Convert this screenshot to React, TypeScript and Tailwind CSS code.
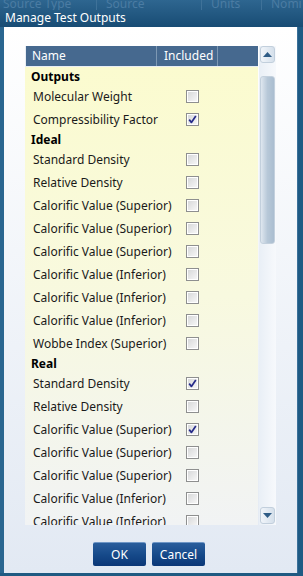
import React from "react";

type Row = { label: string; group?: boolean; checked?: boolean };

const rows: Row[] = [
  { label: "Outputs", group: true },
  { label: "Molecular Weight" },
  { label: "Compressibility Factor", checked: true },
  { label: "Ideal", group: true },
  { label: "Standard Density" },
  { label: "Relative Density" },
  { label: "Calorific Value (Superior)" },
  { label: "Calorific Value (Superior)" },
  { label: "Calorific Value (Superior)" },
  { label: "Calorific Value (Inferior)" },
  { label: "Calorific Value (Inferior)" },
  { label: "Calorific Value (Inferior)" },
  { label: "Wobbe Index (Superior)" },
  { label: "Real", group: true },
  { label: "Standard Density", checked: true },
  { label: "Relative Density" },
  { label: "Calorific Value (Superior)", checked: true },
  { label: "Calorific Value (Superior)" },
  { label: "Calorific Value (Superior)" },
  { label: "Calorific Value (Inferior)" },
  { label: "Calorific Value (Inferior)" },
];

function CheckBox({ checked }: { checked?: boolean }) {
  return (
    <div className="w-[13px] h-[13px] border border-[#8e8f8f] bg-white p-[1px]">
      <div className="w-full h-full bg-gradient-to-br from-[#d8d9da] to-[#f6f6f6] flex items-center justify-center">
        {checked && (
          <svg width="9" height="9" viewBox="0 0 9 9">
            <path d="M1.2 4.6 L3.4 7.4 L7.8 0.9" fill="none" stroke="#262b8a" strokeWidth="1.7" strokeLinejoin="round" />
          </svg>
        )}
      </div>
    </div>
  );
}

function ScrollButton({ up }: { up?: boolean }) {
  return (
    <div className="h-[17px] mx-[1px] rounded-[3px] border border-[#c2cfdc] bg-gradient-to-r from-[#f1f5fa] to-[#d5e0eb] flex items-center justify-center">
      <svg width="9" height="5" viewBox="0 0 9 5">
        {up ? <path d="M0 5 L4.5 0 L9 5 Z" fill="#2f5c86" /> : <path d="M0 0 L4.5 5 L9 0 Z" fill="#2f5c86" />}
      </svg>
    </div>
  );
}

export default function App() {
  return (
    <div
      className="w-[303px] h-[576px] bg-[#245d86] flex flex-col overflow-hidden select-none"
      style={{ fontFamily: '"Segoe UI", "Noto Sans", sans-serif' }}
    >
      {/* title bar, the grid behind the dialog shows through faintly */}
      <div className="h-[27px] shrink-0 flex flex-col bg-gradient-to-b from-[#2e6690] to-[#184c74]">
        <div className="h-[10px] shrink-0 overflow-hidden flex text-[12px] text-[#4b7ca3] leading-[12px]">
          <span className="w-[97px] pl-[3px] border-r border-[#3f7299] -mt-[2px]">Source Type</span>
          <span className="w-[105px] pl-[9px] border-r border-[#3f7299] -mt-[2px]">Source</span>
          <span className="w-[60px] pl-[9px] border-r border-[#3f7299] -mt-[2px]">Units</span>
          <span className="pl-[9px] -mt-[2px]">Nomi</span>
        </div>
        <div className="pl-[5px] text-[12px] leading-[16px] text-white">Manage Test Outputs</div>
      </div>

      <div className="flex flex-1 min-h-0">
        <div className="w-[4px] shrink-0 bg-[#2a6690]" />
        <div className="flex-1 flex flex-col bg-gradient-to-b from-white to-[#e2e9f3]">
          <div className="flex pl-[21px] pt-[19px] h-[498px]">
            {/* grid */}
            <div className="w-[233px] flex flex-col">
              <div className="h-[21px] shrink-0 bg-[#46698f] border-l border-b border-[#e8eef5] flex text-[12px] text-white leading-[20px]">
                <div className="w-[131px] pl-[6px] border-r border-[#7d98b3]">Name</div>
                <div className="w-[61px] pl-[7px] border-r border-[#7d98b3]">Included</div>
                <div className="flex-1" />
              </div>
              <div className="flex-1 overflow-hidden bg-gradient-to-b from-[#fbfbcf] via-[#f8f9df] to-[#f1f3f4] pt-[1px]">
                {rows.map((r, i) =>
                  r.group ? (
                    <div key={i} className="h-[17px] pl-[6px] flex items-center text-[12px] font-bold text-black">
                      {r.label}
                    </div>
                  ) : (
                    <div key={i} className="h-[23px] flex items-center text-[12px] text-[#1a1a1a]">
                      <div className="w-[161px] pl-[8px]">{r.label}</div>
                      <CheckBox checked={r.checked} />
                    </div>
                  )
                )}
              </div>
            </div>
            {/* scrollbar */}
            <div className="w-[17px] ml-[1px] flex flex-col bg-gradient-to-r from-[#e9eff6] to-[#f7f9fc] pb-[1px]">
              <ScrollButton up />
              <div className="mt-[13px] h-[168px] mx-[1px] rounded-[3px] border border-[#c3d0dd] bg-gradient-to-r from-[#dfe7ef] via-[#b7c8d8] to-[#aabdd0]" />
              <div className="flex-1" />
              <ScrollButton />
            </div>
          </div>

          <div className="flex justify-center gap-[6px] pt-[17px] pr-[3px]">
            <button className="w-[53px] h-[24px] rounded-[2px] border-t border-[#6f97c6] bg-gradient-to-b from-[#2a5e9c] via-[#164a8a] to-[#0b3777] text-[12px] text-white">
              OK
            </button>
            <button className="w-[53px] h-[24px] rounded-[2px] border-t border-[#6f97c6] bg-gradient-to-b from-[#2a5e9c] via-[#164a8a] to-[#0b3777] text-[12px] text-white">
              Cancel
            </button>
          </div>
        </div>
        <div className="w-[6px] shrink-0 bg-[#1e5a84] border-l border-[#3a7099]" />
      </div>
      <div className="h-[3px] shrink-0 bg-[#1f5a82]" />
    </div>
  );
}
